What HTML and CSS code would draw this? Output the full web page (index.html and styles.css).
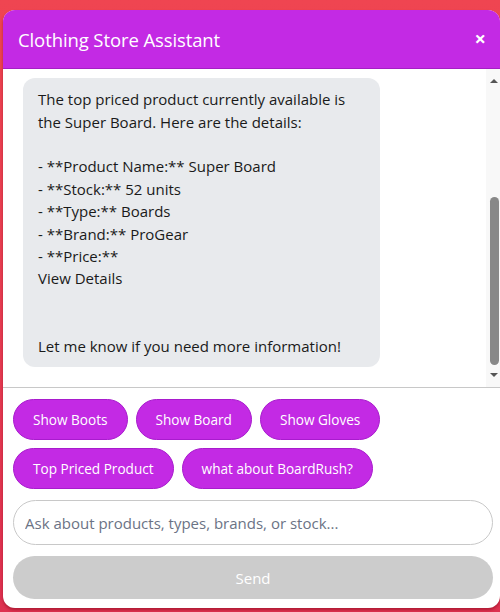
FILE: index.html
```html
<!DOCTYPE html>
<html lang="en">
<head>
<meta charset="utf-8">
<title>Clothing Store Assistant</title>
<link rel="stylesheet" href="styles.css">
</head>
<body>
<div class="chat">
  <header class="chat-header">
    <h1 class="chat-title">Clothing Store Assistant</h1>
    <button class="chat-close" type="button" aria-label="Close">×</button>
  </header>
  <div class="chat-body">
    <div class="chat-scroll">
      <div class="chat-messages">
        <div class="msg msg-bot">The top priced product currently available is the Super Board. Here are the details:

- **Product Name:** Super Board
- **Stock:** 52 units
- **Type:** Boards
- **Brand:** ProGear
- **Price:**
<span class="msg-link">View Details</span>


Let me know if you need more information!</div>
      </div>
    </div>
    <div class="scrollbar" aria-hidden="true">
      <div class="scrollbar-btn scrollbar-up"><span class="tri tri-up"></span></div>
      <div class="scrollbar-track"><div class="scrollbar-thumb"></div></div>
      <div class="scrollbar-btn scrollbar-down"><span class="tri tri-down"></span></div>
    </div>
  </div>
  <div class="quick">
    <button class="quick-btn" type="button">Show Boots</button>
    <button class="quick-btn" type="button">Show Board</button>
    <button class="quick-btn" type="button">Show Gloves</button>
    <button class="quick-btn" type="button">Top Priced Product</button>
    <button class="quick-btn" type="button">what about BoardRush?</button>
  </div>
  <form class="composer">
    <input class="composer-input" type="text" placeholder="Ask about products, types, brands, or stock...">
    <button class="composer-send" type="button" disabled>Send</button>
  </form>
</div>
</body>
</html>
```
FILE: styles.css
```css
* { box-sizing: border-box; }
html, body { margin: 0; height: 612px; }
body {
  background: linear-gradient(180deg, #ef4551 0%, #e63b52 60%, #de3150 100%);
  font-family: "Open Sans", "Noto Sans", sans-serif;
  overflow: hidden;
}
.chat {
  margin: 10px 0 0 3px;
  height: 598px;
  background: #fff;
  border-radius: 12px;
  overflow: hidden;
  display: flex;
  flex-direction: column;
  box-shadow: 0 2px 3px rgba(120, 0, 20, 0.45);
}
.chat-header {
  height: 59px;
  flex: none;
  background: #c32ae4;
  border-bottom: 1px solid #a51fc4;
  display: flex;
  align-items: center;
  justify-content: space-between;
  padding: 0 14px 0 15px;
  color: #fff;
}
.chat-title {
  margin: 0;
  font-size: 18.5px;
  font-weight: 400;
  letter-spacing: -0.1px;
}
.chat-close {
  background: none;
  border: 0;
  color: #fff;
  font-size: 20px;
  font-weight: 700;
  padding: 0;
  font-family: "Open Sans", sans-serif;
  line-height: 1;
}
.chat-body {
  flex: 1;
  min-height: 0;
  display: flex;
  border-bottom: 1px solid #c8c8c8;
}
.chat-scroll {
  flex: 1;
  overflow-y: auto;
  display: flex;
  flex-direction: column-reverse;
  scrollbar-width: none;
}
.chat-messages {
  display: flex;
  flex-direction: column;
  gap: 10px;
  padding: 10px 20px 20px;
}
.msg {
  max-width: 80.5%;
  padding: 10px 15px;
  border-radius: 12px;
  font-size: 15px;
  line-height: 22.4px;
  white-space: pre-line;
  color: #1a1a1a;
}
.msg-bot {
  align-self: flex-start;
  background: #e8eaed;
}
.scrollbar {
  width: 14px;
  flex: none;
  background: #f8f8f8;
  display: flex;
  flex-direction: column;
}
.scrollbar-btn {
  height: 17px;
  flex: none;
  display: flex;
  justify-content: center;
  padding-left: 2px;
}
.scrollbar-up { align-items: flex-end; padding-bottom: 3px; }
.scrollbar-down { align-items: flex-start; padding-top: 3px; }
.tri {
  width: 0;
  height: 0;
  border-left: 4px solid transparent;
  border-right: 4px solid transparent;
}
.tri-up { border-bottom: 4px solid #555; }
.tri-down { border-top: 4px solid #555; }
.scrollbar-track { flex: 1; padding: 111px 1px 0 4px; }
.scrollbar-thumb {
  height: 168px;
  border-radius: 5px;
  background: #888;
}
.quick {
  flex: none;
  display: flex;
  flex-wrap: wrap;
  gap: 8px;
  padding: 11px 10px 0;
}
.quick-btn {
  height: 41px;
  padding: 0 19px;
  border-radius: 21px;
  border: 1px solid #a81ccd;
  background: #c32ae4;
  color: #fff;
  font-family: "Open Sans", sans-serif;
  font-size: 13.6px;
}
.composer {
  flex: none;
  display: flex;
  flex-direction: column;
  gap: 11px;
  padding: 11px 7px 9px 10px;
  margin: 0;
}
.composer-input {
  height: 45px;
  border: 1px solid #c8c8c8;
  border-radius: 23px;
  padding: 0 11px;
  font-family: "Open Sans", sans-serif;
  font-size: 15px;
  color: #222;
  outline: none;
}
.composer-input::placeholder { color: #6b7385; }
.composer-send {
  height: 43px;
  border: 0;
  border-radius: 22px;
  background: #cccccc;
  color: #fff;
  font-family: "Open Sans", sans-serif;
  font-size: 15px;
}
```
